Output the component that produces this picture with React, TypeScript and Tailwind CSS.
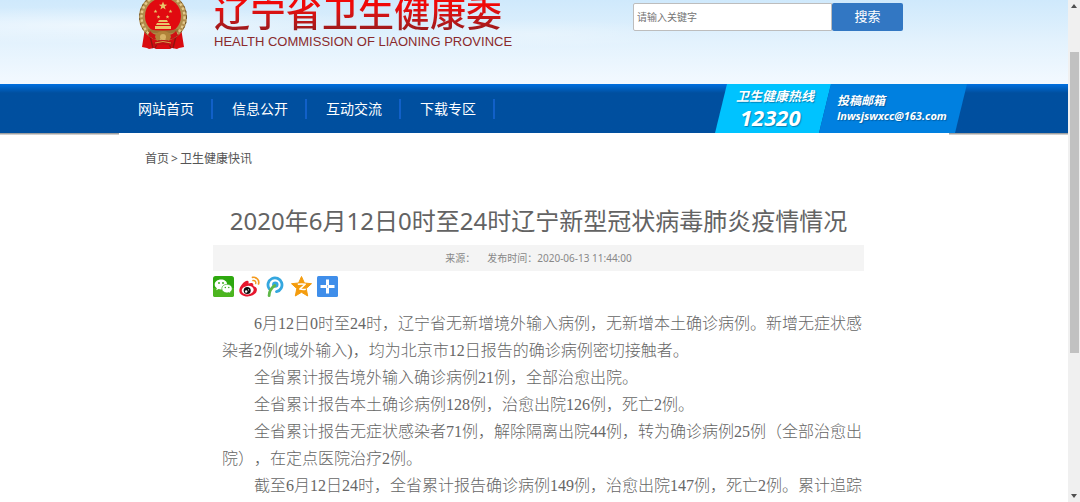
import { FC } from 'react';

const navItems = ['网站首页', '信息公开', '互动交流', '下载专区'];

const paragraphs = [
  '6月12日0时至24时，辽宁省无新增境外输入病例，无新增本土确诊病例。新增无症状感染者2例(域外输入)，均为北京市12日报告的确诊病例密切接触者。',
  '全省累计报告境外输入确诊病例21例，全部治愈出院。',
  '全省累计报告本土确诊病例128例，治愈出院126例，死亡2例。',
  '全省累计报告无症状感染者71例，解除隔离出院44例，转为确诊病例25例（全部治愈出院），在定点医院治疗2例。',
  '截至6月12日24时，全省累计报告确诊病例149例，治愈出院147例，死亡2例。累计追踪',
];

const STAR = 'M0-1 .26-.32.95-.31.39.12.59.81 0 .4-.59.81-.39.12-.95-.31-.26-.32Z';

const Emblem: FC = () => (
  <svg viewBox="0 0 50 58" className="-mt-2 h-[58px] w-[50px] shrink-0" aria-hidden="true">
    <path d="M7 36 4 55l5 1 2 1 5-1 2 1h14l2-1 5 1 2-1 5-1-3-19Z" fill="#d90b10" />
    <path d="M12 44l3 12M38 44l-3 12M20 50l-3 6M30 50l3 6" stroke="#8e1511" strokeWidth="1.4" />
    <ellipse cx="25" cy="25" rx="24" ry="24" fill="#b08d4c" />
    <ellipse cx="25" cy="25" rx="21.5" ry="22" fill="none" stroke="#e3c98b" strokeWidth="2.4" strokeDasharray="2.5 2" />
    <ellipse cx="25" cy="25" rx="23.5" ry="23.5" fill="none" stroke="#6b4d24" strokeWidth="1" strokeDasharray="2 3" />
    <circle cx="25" cy="24" r="18" fill="#e10a10" />
    <g fill="#e9c46a">
      <path d={STAR} transform="translate(25 14) scale(4.4)" />
      <path d={STAR} transform="translate(17.5 19.5) scale(2)" />
      <path d={STAR} transform="translate(20.5 25) scale(2)" />
      <path d={STAR} transform="translate(32.5 19.5) scale(2)" />
      <path d={STAR} transform="translate(29.5 25) scale(2)" />
      <path d="M20 30l1-2h8l1 2ZM18 33l1-2h12l1 2ZM17 34h16v3H17Z" />
    </g>
    <path d="M10 37q15 3 30 0v3q-15 3-30 0Z" fill="#9c7434" />
    <path d="M12 39q5 6 13 3 8 3 13-3l2 4q-7 7-15 3-8 4-15-3Z" fill="#cf1013" />
    <path d="M17 45a8 6 0 0 1 16 0l-2 4q-6-4-12 0Z" fill="#b08339" />
    <circle cx="25" cy="45" r="3" fill="#d8b366" />
    <path d="M16 50q9-4 18 0l1 4q-10-3-20 0Z" fill="#c00f12" />
    <path d="M17 51q8-3 16 0" stroke="#d8a24c" fill="none" />
  </svg>
);

const iconClass = 'block size-[21px]';

const WechatIcon: FC = () => (
  <svg viewBox="0 0 21 21" className={iconClass} aria-hidden="true">
    <rect width="21" height="21" rx="2.5" fill="#2ea80f" />
    <path d="M0 12h21v6.500a2.500 2.500 0 0 1-2.500 2.500h-16A2.500 2.500 0 0 1 0 18.500Z" fill="#4cb51f" />
    <path d="M8 3.500c-3.600 0-6.300 2.200-6.300 5 0 1.600.8 2.900 2.200 3.800l-.7 2 2.400-1.200c.8.2 1.500.3 2.400.3 3.500 0 6.200-2.200 6.200-5s-2.700-4.900-6.200-4.900Z" fill="#fff" />
    <path d="M14 8.300c-3 0-5.200 1.900-5.200 4.300s2.200 4.300 5.200 4.300c.7 0 1.300-.1 1.900-.3l1.900 1-.5-1.700c1.200-.8 1.900-1.900 1.900-3.300 0-2.400-2.200-4.300-5.200-4.300Z" fill="#fff" stroke="#2ea80f" strokeWidth=".6" />
    <g fill="#2ea80f">
      <circle cx="6" cy="7" r=".9" />
      <circle cx="10" cy="7" r=".9" />
      <circle cx="12.300" cy="11.500" r=".7" />
      <circle cx="15.800" cy="11.500" r=".7" />
    </g>
  </svg>
);

const WeiboIcon: FC = () => (
  <svg viewBox="0 0 21 21" className={iconClass} aria-hidden="true">
    <path d="M8.500 4.700c1.300.3 1.300 1.700.9 2.900 2.500-1.200 5.300-1 4.900 1.700 0 .8.300.9 1.100 1.200 1.600.6 2.500 1.600 2.500 3.200 0 3.500-4 6.700-9.300 6.700-4.800 0-8.300-2.400-8.300-6 0-4 5.300-10.200 8.200-9.700Z" fill="#e6162d" />
    <ellipse cx="8.700" cy="14.200" rx="6" ry="4.300" fill="#fff" transform="rotate(-8 8.700 14.200)" />
    <circle cx="8.200" cy="14.600" r="3.500" fill="#0d0d0d" />
    <circle cx="7.200" cy="15.500" r="1.200" fill="#fff" />
    <circle cx="9.500" cy="13.800" r=".6" fill="#fff" />
    <g fill="none" stroke="#f39a1f" strokeLinecap="round">
      <path d="M13.500 1.400c4-.8 7.200 2.800 6 6.600" strokeWidth="1.700" />
      <path d="M13.900 4.500c2-.4 3.400 1.200 2.800 3" strokeWidth="1.400" />
    </g>
  </svg>
);

const TencentIcon: FC = () => (
  <svg viewBox="0 0 21 21" className={iconClass} aria-hidden="true">
    <path d="M4.200 12.800A7 7 0 1 1 11.500 15.700" fill="none" stroke="#35a7df" strokeWidth="2.800" strokeLinecap="round" />
    <circle cx="10.300" cy="8.600" r="3.200" fill="#35a7df" />
    <path d="M9.800 9.500C6 12 4.200 15.500 4.100 19.600" fill="none" stroke="#5fb848" strokeWidth="2.800" strokeLinecap="round" />
  </svg>
);

const QzoneIcon: FC = () => (
  <svg viewBox="0 0 21 21" className={iconClass} aria-hidden="true">
    <path d="M10.500.5 13.400 7l7.100.7-5.300 4.800 1.500 7.500-6.200-3.700L4.300 20l1.500-7.500L.5 7.700 7.600 7Z" fill="#f49c0d" stroke="#f49c0d" strokeLinejoin="round" />
    <path d="M6.800 8.200q4-.6 7.400 0l-5.400 4.900q3 .7 6 .2" fill="none" stroke="#fff" strokeWidth="1.500" strokeLinejoin="round" />
  </svg>
);

const MoreIcon: FC = () => (
  <svg viewBox="0 0 21 21" className={iconClass} aria-hidden="true">
    <rect width="21" height="21" rx="1.500" fill="#3f8eea" />
    <path d="M10.500 3.500v14M3.500 10.500h14" stroke="#fff" strokeWidth="3" />
    <path d="M10.500 9v3" stroke="#3f8eea" strokeWidth=".6" />
  </svg>
);

const shares = [
  { label: '微信', Icon: WechatIcon },
  { label: '新浪微博', Icon: WeiboIcon },
  { label: '腾讯微博', Icon: TencentIcon },
  { label: 'QQ空间', Icon: QzoneIcon },
  { label: '更多', Icon: MoreIcon },
];

const SiteHeader: FC = () => (
  <header className="h-[84px] overflow-hidden bg-[radial-gradient(ellipse_at_8%_30%,#ffffff80,transparent_22%),radial-gradient(ellipse_at_50%_40%,#ffffff40,transparent_20%),linear-gradient(#cfe9fc,#e3f2fd_50%,#f3f9ff)]">
    <div className="mx-auto flex w-full max-w-[830px] items-start pr-[46px] pl-[19px]">
      <Emblem />
      <div className="-mt-1.5 ml-[26px] whitespace-nowrap">
        <p className="bg-linear-to-b from-[#f00808] from-30% to-[#961a1c] to-95% bg-clip-text text-[36px] leading-10 font-medium text-transparent">
          辽宁省卫生健康委
        </p>
        <p className="font-['Liberation_Sans',sans-serif] text-[13px] leading-4 text-[#8a2a2c]">
          HEALTH COMMISSION OF LIAONING PROVINCE
        </p>
      </div>
      <form className="mt-[3px] ml-auto flex h-7" onSubmit={(e) => e.preventDefault()}>
        <input
          type="text"
          aria-label="请输入关键字"
          placeholder="请输入关键字"
          className="w-[199px] rounded-l-xs border border-[#bdbdbd] bg-white px-[3px] text-[10px] placeholder:text-[#757575]"
        />
        <button type="submit" className="w-[71px] rounded-xs bg-[#3277c3] text-[13px] text-white">
          搜索
        </button>
      </form>
    </div>
  </header>
);

const NavBar: FC = () => (
  <nav className="bg-linear-to-b from-[#0070e0] to-[#004f9f] to-[9px]">
    <div className="mx-auto flex h-[49px] w-full max-w-[830px] items-center">
      {navItems.map((item) => (
        <a
          key={item}
          href="#"
          className="w-[94px] shrink-0 border-r-2 border-[#1160c8] pl-0.5 text-center text-[14px] leading-5 text-white"
        >
          {item}
        </a>
      ))}
      <div className="-mr-[18px] ml-auto flex h-full shrink-0 whitespace-nowrap text-white italic font-bold text-shadow-[1px_1px_1px_#00407080]">
        <a
          href="#"
          className="flex w-[116px] flex-col bg-[#00c3ff] pt-1 pl-[21px] [clip-path:polygon(12px_0,100%_0,calc(100%-12px)_100%,0_100%)]"
        >
          <span className="text-[13px] leading-4">卫生健康热线</span>
          <span className="pl-1 text-[22px] leading-[26px]">12320</span>
        </a>
        <a
          href="#"
          className="-ml-3 flex w-[148px] flex-col bg-[#0080e0] pt-[9px] pl-[18px] [clip-path:polygon(12px_0,100%_0,calc(100%-12px)_100%,0_100%)]"
        >
          <span className="text-[12px] leading-4">投稿邮箱</span>
          <span className="text-[11px] leading-[14px]">lnwsjswxcc@163.com</span>
        </a>
      </div>
    </div>
  </nav>
);

const Article: FC = () => (
  <main className="mx-auto w-full max-w-[830px] bg-white">
    <p className="flex gap-0.5 pt-4 pl-[26px] text-[12px] leading-5 text-[#555]">
      <a href="#">首页</a>
      <span>&gt;</span>
      <a href="#">卫生健康快讯</a>
    </p>
    <article className="mr-[85px] ml-[94px]">
      <h1 className="pt-8 text-center text-[24px] leading-10 whitespace-nowrap text-[#636363]">
        2020年6月12日0时至24时辽宁新型冠状病毒肺炎疫情情况
      </h1>
      <p className="mt-1 flex justify-center gap-3 bg-[#f4f4f4] text-[10px] leading-[26px] text-[#888]">
        <span>来源：</span>
        <span>发布时间：2020-06-13 11:44:00</span>
      </p>
      <div className="mt-[5px] flex gap-[5px]">
        {shares.map(({ label, Icon }) => (
          <a key={label} href="#" aria-label={label}>
            <Icon />
          </a>
        ))}
      </div>
      <div className="mt-[13px] pl-[9px] font-['Liberation_Serif','Noto_Sans_CJK_SC',serif] text-[16px] leading-[27px] font-light text-[#666] [text-spacing-trim:space-all]">
        {paragraphs.map((text) => (
          <p key={text} className="indent-8">
            {text}
          </p>
        ))}
      </div>
    </article>
  </main>
);

const ScrollRail: FC = () => (
  <div className="flex h-full w-3 shrink-0 flex-col items-center bg-[#f0f0f0] py-1" aria-hidden="true">
    <svg viewBox="0 0 6 4" className="h-1 w-1.5">
      <path d="M3 0 6 4H0Z" fill="#505050" />
    </svg>
    <div className="mt-11 h-[61%] w-[9px] bg-[#c1c1c1]" />
    <svg viewBox="0 0 6 4" className="mt-auto h-1 w-1.5">
      <path d="M0 0h6L3 4Z" fill="#505050" />
    </svg>
  </div>
);

export default function App() {
  return (
    <div
      lang="zh-CN"
      className="flex h-screen overflow-hidden bg-white font-['Noto_Sans','Noto_Sans_CJK_SC',sans-serif]"
    >
      <div className="min-w-0 flex-1 overflow-hidden">
        <SiteHeader />
        <NavBar />
        <div className="bg-linear-to-b from-[#a0a0a0] from-[1px] to-white to-[2px]">
          <Article />
        </div>
      </div>
      <ScrollRail />
    </div>
  );
}
